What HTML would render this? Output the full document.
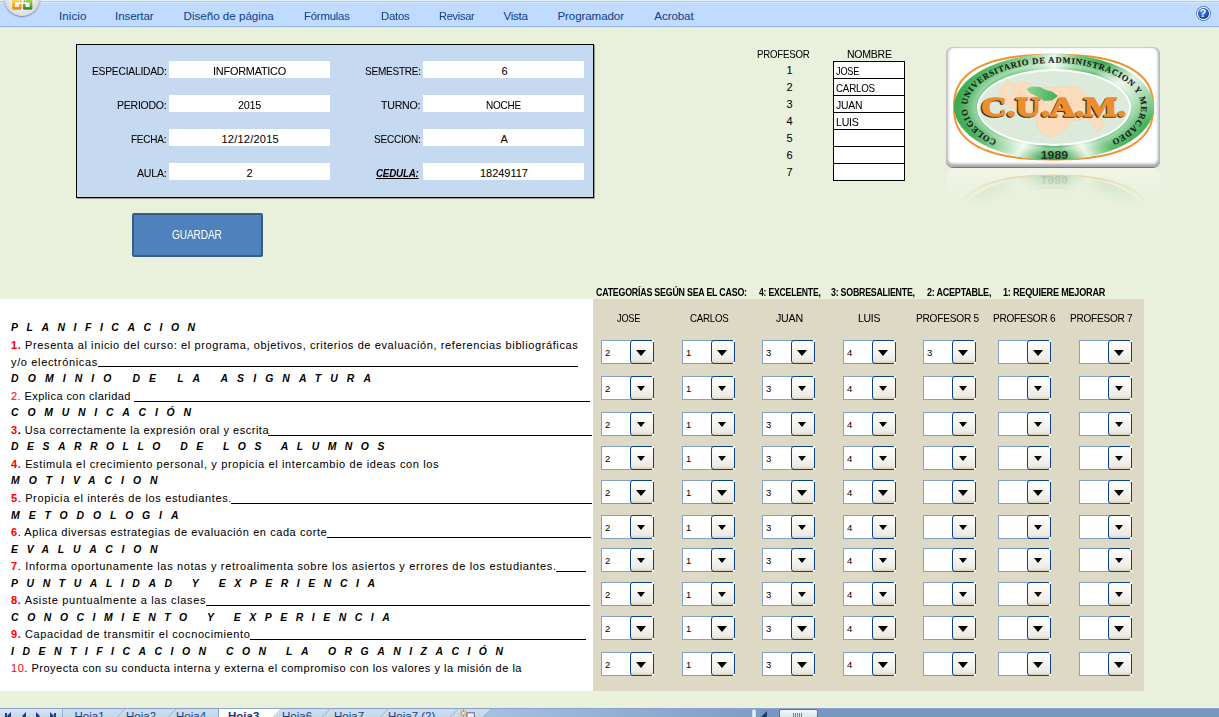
<!DOCTYPE html>
<html><head><meta charset="utf-8"><style>
*{margin:0;padding:0;box-sizing:border-box}
html,body{width:1219px;height:717px;overflow:hidden;background:#E9F0DC;position:relative;font-family:'Liberation Sans',sans-serif}
.t{position:absolute;white-space:pre;-webkit-text-stroke:0.05px currentColor}
#ribbon{position:absolute;left:0;top:0;width:1219px;height:28px;background:#BFDBFF}
#rtop{position:absolute;left:0;top:0;width:1219px;height:1px;background:#DDF5FF}
#rl1{position:absolute;left:0;top:1px;width:1219px;height:1px;background:#ABCAF2}
#rl2{position:absolute;left:0;top:2px;width:1219px;height:1px;background:#DCE6F8}
#rb1{position:absolute;left:0;top:26px;width:1219px;height:1px;background:#99B8E2}
#rb2{position:absolute;left:0;top:27px;width:1219px;height:1px;background:#D7E4F2}
#obtn{position:absolute;left:2px;top:-17px;width:38px;height:34px;border-radius:50%;background:radial-gradient(circle at 50% 30%,#ffffff 0%,#EEF1F5 45%,#C9CFD8 75%,#8E97A4 100%);box-shadow:0 1px 1px rgba(60,70,90,.5)}
#help{position:absolute;left:1196.5px;top:7.3px;width:13px;height:13px;border-radius:50%;background:radial-gradient(circle at 40% 35%,#4A8EF8,#0B3EB8 75%);border:1.4px solid #fff;box-shadow:0 0 0 0.9px #4F7EC4}
#help:after{content:"?";position:absolute;left:0;top:-1.5px;width:10.5px;text-align:center;color:#fff;font:bold 11px/13px 'Liberation Sans',sans-serif}
#box{position:absolute;left:76px;top:44px;width:518px;height:154px;background:#C5D9F1;border:1px solid #000;box-shadow:1px 1px 0 rgba(0,0,0,.35)}
.fld{position:absolute;width:161px;height:17px;background:#fff}
.pc{position:absolute;left:833px;width:72px;height:18px;border:1px solid #000;background:#fff}
#btn{position:absolute;left:132px;top:213px;width:131px;height:44px;background:#4F81BD;border:2px solid #385D8A;border-radius:2px}
#white{position:absolute;left:0;top:299px;width:593px;height:392px;background:#fff}
#tan{position:absolute;left:593px;top:299px;width:551px;height:392px;background:#DDD9C4}
.ul{position:absolute;height:1px;background:#000}
.dd{position:absolute;width:53px;height:24px;background:#fff;border:1px solid #85A2C4}
.dd span{position:absolute;left:3px;top:6px;font:9.5px/12px 'Liberation Sans',sans-serif;color:#000}
.dd b{position:absolute;right:-1px;top:-1px;width:24px;height:24px;border:1.6px solid #0B4187;border-radius:3px;background:linear-gradient(#FFFFFF,#F8F7F3 40%,#ECEAE3 88%,#D8D0BC)}
.dd b:before,.dd b:after{content:'';position:absolute;right:-1px;width:1.6px;height:1.6px;background:#fff}
.dd b:before{top:-1px} .dd b:after{bottom:-1px}
.dd i{position:absolute;left:4.6px;top:9px;width:0;height:0;border-left:5.9px solid transparent;border-right:5.9px solid transparent;border-top:6.2px solid #000}
.dd.s i{left:5.6px;top:9.4px;border-left-width:4.8px;border-right-width:4.8px;border-top-width:5.2px}
#tabs{position:absolute;left:0;top:708px;width:1219px;height:9px;background:#7A99C3}
#logo{position:absolute;left:940px;top:42px}
</style></head><body>
<div id="ribbon"></div><div id="rtop"></div><div id="rl1"></div><div id="rl2"></div><div id="rb1"></div><div id="rb2"></div>
<div style="position:absolute;left:3.5px;top:-21px;width:36px;height:37px;border-radius:50%;background:radial-gradient(ellipse at 50% 40%,#ffffff 0%,#F2F4F7 45%,#D3D8E0 72%,#9AA3B0 100%);box-shadow:0 1px 1.5px rgba(50,60,80,.55)"></div>
<svg style="position:absolute;left:0;top:0" width="40" height="20" viewBox="0 0 40 20">
 <defs>
  <linearGradient id="og" x1="0" y1="0" x2="0" y2="1"><stop offset="0" stop-color="#FFD24A"/><stop offset="1" stop-color="#F08C00"/></linearGradient>
  <linearGradient id="gg" x1="0" y1="0" x2="0" y2="1"><stop offset="0" stop-color="#9CD44A"/><stop offset="1" stop-color="#3E8E1E"/></linearGradient>
 </defs>
 <path d="M13.5,1 L13.5,8.3 L20.3,8.3 L20.3,5.2 M13.5,1 L17.5,1" stroke="url(#og)" stroke-width="2.8" fill="none" stroke-linejoin="round" stroke-linecap="round"/>
 <circle cx="20.6" cy="1.3" r="1.1" fill="#F5A623"/>
 <path d="M24.3,5.2 L24.3,8.3 L31,8.3 L31,1 L27.3,1" stroke="url(#gg)" stroke-width="2.8" fill="none" stroke-linejoin="round" stroke-linecap="round"/>
 <circle cx="24.6" cy="1.3" r="1.1" fill="#6DB33F"/>
</svg>

<div id="help"></div>
<div id="box"></div>
<div class="fld" style="left:169px;top:61px"></div>
<div class="fld" style="left:423px;top:61px"></div>
<div class="fld" style="left:169px;top:95px"></div>
<div class="fld" style="left:423px;top:95px"></div>
<div class="fld" style="left:169px;top:129px"></div>
<div class="fld" style="left:423px;top:129px"></div>
<div class="fld" style="left:169px;top:163px"></div>
<div class="fld" style="left:423px;top:163px"></div>
<div class="pc" style="top:61px"></div>
<div class="pc" style="top:78px"></div>
<div class="pc" style="top:95px"></div>
<div class="pc" style="top:112px"></div>
<div class="pc" style="top:129px"></div>
<div class="pc" style="top:146px"></div>
<div class="pc" style="top:163px"></div>
<div id="btn"></div>
<div id="white"></div><div id="tan"></div>
<div class="ul" style="left:98px;width:480px;top:366px"></div>
<div class="ul" style="left:134px;width:456px;top:401px"></div>
<div class="ul" style="left:268px;width:324px;top:435px"></div>
<div class="ul" style="left:231px;width:361px;top:503px"></div>
<div class="ul" style="left:327px;width:264px;top:537px"></div>
<div class="ul" style="left:556px;width:30px;top:571px"></div>
<div class="ul" style="left:206px;width:384px;top:605px"></div>
<div class="ul" style="left:250px;width:336px;top:639px"></div>
<div class="dd" style="left:601px;top:340px"><span>2</span><b><i></i></b></div>
<div class="dd" style="left:682px;top:340px"><span>1</span><b><i></i></b></div>
<div class="dd" style="left:762px;top:340px"><span>3</span><b><i></i></b></div>
<div class="dd" style="left:843px;top:340px"><span>4</span><b><i></i></b></div>
<div class="dd" style="left:923px;top:340px"><span>3</span><b><i></i></b></div>
<div class="dd" style="left:998px;top:340px"><span></span><b><i></i></b></div>
<div class="dd" style="left:1079px;top:340px"><span></span><b><i></i></b></div>
<div class="dd s" style="left:601px;top:376px"><span>2</span><b><i></i></b></div>
<div class="dd s" style="left:682px;top:376px"><span>1</span><b><i></i></b></div>
<div class="dd s" style="left:762px;top:376px"><span>3</span><b><i></i></b></div>
<div class="dd s" style="left:843px;top:376px"><span>4</span><b><i></i></b></div>
<div class="dd s" style="left:923px;top:376px"><span></span><b><i></i></b></div>
<div class="dd s" style="left:998px;top:376px"><span></span><b><i></i></b></div>
<div class="dd s" style="left:1079px;top:376px"><span></span><b><i></i></b></div>
<div class="dd s" style="left:601px;top:412px"><span>2</span><b><i></i></b></div>
<div class="dd s" style="left:682px;top:412px"><span>1</span><b><i></i></b></div>
<div class="dd s" style="left:762px;top:412px"><span>3</span><b><i></i></b></div>
<div class="dd s" style="left:843px;top:412px"><span>4</span><b><i></i></b></div>
<div class="dd s" style="left:923px;top:412px"><span></span><b><i></i></b></div>
<div class="dd s" style="left:998px;top:412px"><span></span><b><i></i></b></div>
<div class="dd s" style="left:1079px;top:412px"><span></span><b><i></i></b></div>
<div class="dd s" style="left:601px;top:446px"><span>2</span><b><i></i></b></div>
<div class="dd s" style="left:682px;top:446px"><span>1</span><b><i></i></b></div>
<div class="dd s" style="left:762px;top:446px"><span>3</span><b><i></i></b></div>
<div class="dd s" style="left:843px;top:446px"><span>4</span><b><i></i></b></div>
<div class="dd s" style="left:923px;top:446px"><span></span><b><i></i></b></div>
<div class="dd s" style="left:998px;top:446px"><span></span><b><i></i></b></div>
<div class="dd s" style="left:1079px;top:446px"><span></span><b><i></i></b></div>
<div class="dd" style="left:601px;top:480px"><span>2</span><b><i></i></b></div>
<div class="dd" style="left:682px;top:480px"><span>1</span><b><i></i></b></div>
<div class="dd" style="left:762px;top:480px"><span>3</span><b><i></i></b></div>
<div class="dd" style="left:843px;top:480px"><span>4</span><b><i></i></b></div>
<div class="dd" style="left:923px;top:480px"><span></span><b><i></i></b></div>
<div class="dd" style="left:998px;top:480px"><span></span><b><i></i></b></div>
<div class="dd" style="left:1079px;top:480px"><span></span><b><i></i></b></div>
<div class="dd s" style="left:601px;top:515px"><span>2</span><b><i></i></b></div>
<div class="dd s" style="left:682px;top:515px"><span>1</span><b><i></i></b></div>
<div class="dd s" style="left:762px;top:515px"><span>3</span><b><i></i></b></div>
<div class="dd s" style="left:843px;top:515px"><span>4</span><b><i></i></b></div>
<div class="dd s" style="left:923px;top:515px"><span></span><b><i></i></b></div>
<div class="dd s" style="left:998px;top:515px"><span></span><b><i></i></b></div>
<div class="dd s" style="left:1079px;top:515px"><span></span><b><i></i></b></div>
<div class="dd s" style="left:601px;top:548px"><span>2</span><b><i></i></b></div>
<div class="dd s" style="left:682px;top:548px"><span>1</span><b><i></i></b></div>
<div class="dd s" style="left:762px;top:548px"><span>3</span><b><i></i></b></div>
<div class="dd s" style="left:843px;top:548px"><span>4</span><b><i></i></b></div>
<div class="dd s" style="left:923px;top:548px"><span></span><b><i></i></b></div>
<div class="dd s" style="left:998px;top:548px"><span></span><b><i></i></b></div>
<div class="dd s" style="left:1079px;top:548px"><span></span><b><i></i></b></div>
<div class="dd s" style="left:601px;top:582px"><span>2</span><b><i></i></b></div>
<div class="dd s" style="left:682px;top:582px"><span>1</span><b><i></i></b></div>
<div class="dd s" style="left:762px;top:582px"><span>3</span><b><i></i></b></div>
<div class="dd s" style="left:843px;top:582px"><span>4</span><b><i></i></b></div>
<div class="dd s" style="left:923px;top:582px"><span></span><b><i></i></b></div>
<div class="dd s" style="left:998px;top:582px"><span></span><b><i></i></b></div>
<div class="dd s" style="left:1079px;top:582px"><span></span><b><i></i></b></div>
<div class="dd" style="left:601px;top:616px"><span>2</span><b><i></i></b></div>
<div class="dd" style="left:682px;top:616px"><span>1</span><b><i></i></b></div>
<div class="dd" style="left:762px;top:616px"><span>3</span><b><i></i></b></div>
<div class="dd" style="left:843px;top:616px"><span>4</span><b><i></i></b></div>
<div class="dd" style="left:923px;top:616px"><span></span><b><i></i></b></div>
<div class="dd" style="left:998px;top:616px"><span></span><b><i></i></b></div>
<div class="dd" style="left:1079px;top:616px"><span></span><b><i></i></b></div>
<div class="dd" style="left:601px;top:652px"><span>2</span><b><i></i></b></div>
<div class="dd" style="left:682px;top:652px"><span>1</span><b><i></i></b></div>
<div class="dd" style="left:762px;top:652px"><span>3</span><b><i></i></b></div>
<div class="dd" style="left:843px;top:652px"><span>4</span><b><i></i></b></div>
<div class="dd" style="left:923px;top:652px"><span></span><b><i></i></b></div>
<div class="dd" style="left:998px;top:652px"><span></span><b><i></i></b></div>
<div class="dd" style="left:1079px;top:652px"><span></span><b><i></i></b></div>
<div style="position:absolute;left:0;top:708px;width:1219px;height:9px;background:#7796C2"></div>
<div style="position:absolute;left:0;top:708px;width:495px;height:9px;background:linear-gradient(#A9BFDD,#CFDDF0 2px,#C3D5EE)"></div>
<div style="position:absolute;left:490px;top:708px;width:262px;height:9px;background:linear-gradient(90deg,#A4BCE0,#8FAAD2 60%,#7F9DC8)"></div>
<div style="position:absolute;left:0;top:708px;width:1219px;height:1px;background:#8AA4C8"></div>
<!-- nav arrows -->
<div style="position:absolute;left:0;top:709px;width:62px;height:8px;background:linear-gradient(#D9E5F5,#C6D7EE)"></div>
<div style="position:absolute;left:62px;top:709px;width:1px;height:8px;background:#9DB3D3"></div>
<div style="position:absolute;left:5px;top:713px;width:1.5px;height:4px;background:#1E3F83"></div>
<div style="position:absolute;left:7px;top:712px;width:0;height:0;border-right:4px solid #1E3F83;border-top:4px solid transparent;border-bottom:4px solid transparent"></div>
<div style="position:absolute;left:22px;top:712px;width:0;height:0;border-right:4px solid #1E3F83;border-top:4px solid transparent;border-bottom:4px solid transparent"></div>
<div style="position:absolute;left:36px;top:712px;width:0;height:0;border-left:4px solid #1E3F83;border-top:4px solid transparent;border-bottom:4px solid transparent"></div>
<div style="position:absolute;left:50px;top:712px;width:0;height:0;border-left:4px solid #1E3F83;border-top:4px solid transparent;border-bottom:4px solid transparent"></div>
<div style="position:absolute;left:54px;top:713px;width:1.5px;height:4px;background:#1E3F83"></div>
<!-- tabs -->
<svg style="position:absolute;left:0;top:708px" width="760" height="9" viewBox="0 0 760 9">
 <g stroke="#8DA5C8" stroke-width="1" fill="none">
  <path d="M118.5,9 L126.5,1 M169.5,9 L177.5,1 M273.5,9 L281.5,1 M323.5,9 L331.5,1 M381.5,9 L389.5,1 M451.5,9 L459.5,1 M484,9 L492,1" stroke="#fff" stroke-opacity=".8"/>
  <path d="M117.5,9 L125.5,1"/><path d="M168.5,9 L176.5,1"/><path d="M272.5,9 L280.5,1"/><path d="M322.5,9 L330.5,1"/><path d="M380.5,9 L388.5,1"/><path d="M450.5,9 L458.5,1"/><path d="M483,9 L491,1"/>
 </g>
 <path d="M218.5,9 L218.5,1 L280.5,1 L272.5,9 Z" fill="#fff"/>
 <path d="M218.5,9 L218.5,1" stroke="#8DA5C8"/>
 <path d="M491,1 L760,1 L760,9 L483,9 Z" fill="url(#bg2)"/>
 <defs><linearGradient id="bg2" x1="0" x2="1" y1="0" y2="0"><stop offset="0" stop-color="#A7BFE2"/><stop offset="1" stop-color="#7F9CC7"/></linearGradient></defs>
 <g font-family="Liberation Sans" font-size="11.5" fill="#1E3F83">
  <text x="74.5" y="11.6">Hoja1</text><text x="126" y="11.6">Hoja2</text><text x="176" y="11.6">Hoja4</text>
  <text x="228" y="12" font-weight="bold" fill="#15337A">Hoja3</text>
  <text x="282" y="11.6">Hoja6</text><text x="334" y="11.6">Hoja7</text><text x="388" y="11.6">Hoja7 (2)</text>
 </g>
 <rect x="467" y="4.8" width="7.3" height="6" fill="#E8EEF6" stroke="#50607E" stroke-width=".9"/>
 <g stroke="#E08A10" stroke-width="1" stroke-linecap="round"><path d="M463.5,1.5 L463.5,9 M460,5.3 L467,5.3 M461,2.8 L466,7.8 M466,2.8 L461,7.8"/></g>
 <circle cx="463.5" cy="5.3" r="1.3" fill="#FFF6C0"/>
 <rect x="752" y="1.5" width="4" height="8" rx="1" fill="#EAF1FB" stroke="#7F9AC0" stroke-width=".5"/>
</svg>
<div style="position:absolute;left:761px;top:711px;width:0;height:0;border-right:6px solid #1F3D70;border-top:6px solid transparent"></div>
<div style="position:absolute;left:779px;top:709px;width:39px;height:9px;border:1px solid #5A74A0;border-radius:2px;background:linear-gradient(#F4F7FB,#DDE5F0)"></div>
<div style="position:absolute;left:793px;top:713px;width:9px;height:4px;background:repeating-linear-gradient(90deg,#6E7F99 0 1px,transparent 1px 2px)"></div>

<div id="lg" style="position:absolute;left:930px;top:40px;width:250px;height:180px">
 <div id="refl" style="position:absolute;left:0;top:0;width:250px;height:180px;transform-origin:0 127.5px;transform:scaleY(-1);opacity:.3;-webkit-mask-image:linear-gradient(to bottom,transparent 0,transparent 90px,rgba(0,0,0,.25) 102px,#000 125px)">
  <div style="position:absolute;left:16px;top:7px;width:214px;height:120px;border-radius:7px;background:#fff"></div>
  <svg style="position:absolute;left:0;top:0" width="250" height="180" viewBox="930 40 250 180"><path d="M1153.10,107.10 L1153.07,109.94 L1152.99,112.04 L1152.85,113.93 L1152.66,115.69 L1152.42,117.36 L1152.12,118.96 L1151.76,120.50 L1151.36,121.99 L1150.89,123.43 L1150.38,124.84 L1149.81,126.21 L1149.18,127.54 L1148.51,128.84 L1147.78,130.11 L1146.99,131.35 L1146.16,132.57 L1145.27,133.75 L1144.33,134.91 L1143.33,136.04 L1142.28,137.14 L1141.19,138.21 L1140.04,139.27 L1138.84,140.29 L1137.58,141.29 L1136.28,142.26 L1134.93,143.21 L1133.52,144.13 L1132.07,145.02 L1130.56,145.89 L1129.01,146.74 L1127.40,147.55 L1125.75,148.34 L1124.05,149.11 L1122.29,149.85 L1120.49,150.56 L1118.64,151.24 L1116.74,151.90 L1114.79,152.53 L1112.80,153.14 L1110.75,153.72 L1108.65,154.27 L1106.50,154.79 L1104.30,155.28 L1102.05,155.75 L1099.74,156.19 L1097.38,156.60 L1094.96,156.99 L1092.49,157.34 L1089.95,157.67 L1087.35,157.97 L1084.67,158.24 L1081.92,158.48 L1079.09,158.70 L1076.16,158.88 L1073.12,159.04 L1069.94,159.17 L1066.59,159.27 L1062.99,159.34 L1059.00,159.39 L1053.60,159.40 L1048.20,159.39 L1044.21,159.34 L1040.61,159.27 L1037.26,159.17 L1034.08,159.04 L1031.04,158.88 L1028.11,158.70 L1025.28,158.48 L1022.53,158.24 L1019.85,157.97 L1017.25,157.67 L1014.71,157.34 L1012.24,156.99 L1009.82,156.60 L1007.46,156.19 L1005.15,155.75 L1002.90,155.28 L1000.70,154.79 L998.55,154.27 L996.45,153.72 L994.40,153.14 L992.41,152.53 L990.46,151.90 L988.56,151.24 L986.71,150.56 L984.91,149.85 L983.15,149.11 L981.45,148.34 L979.80,147.55 L978.19,146.74 L976.64,145.89 L975.13,145.02 L973.68,144.13 L972.27,143.21 L970.92,142.26 L969.62,141.29 L968.36,140.29 L967.16,139.27 L966.01,138.21 L964.92,137.14 L963.87,136.04 L962.87,134.91 L961.93,133.75 L961.04,132.57 L960.21,131.35 L959.42,130.11 L958.69,128.84 L958.02,127.54 L957.39,126.21 L956.82,124.84 L956.31,123.43 L955.84,121.99 L955.44,120.50 L955.08,118.96 L954.78,117.36 L954.54,115.69 L954.35,113.93 L954.21,112.04 L954.13,109.94 L954.10,107.10 L954.13,104.26 L954.21,102.16 L954.35,100.27 L954.54,98.51 L954.78,96.84 L955.08,95.24 L955.44,93.70 L955.84,92.21 L956.31,90.77 L956.82,89.36 L957.39,87.99 L958.02,86.66 L958.69,85.36 L959.42,84.09 L960.21,82.85 L961.04,81.63 L961.93,80.45 L962.87,79.29 L963.87,78.16 L964.92,77.06 L966.01,75.99 L967.16,74.93 L968.36,73.91 L969.62,72.91 L970.92,71.94 L972.27,70.99 L973.68,70.07 L975.13,69.18 L976.64,68.31 L978.19,67.46 L979.80,66.65 L981.45,65.86 L983.15,65.09 L984.91,64.35 L986.71,63.64 L988.56,62.96 L990.46,62.30 L992.41,61.67 L994.40,61.06 L996.45,60.48 L998.55,59.93 L1000.70,59.41 L1002.90,58.92 L1005.15,58.45 L1007.46,58.01 L1009.82,57.60 L1012.24,57.21 L1014.71,56.86 L1017.25,56.53 L1019.85,56.23 L1022.53,55.96 L1025.28,55.72 L1028.11,55.50 L1031.04,55.32 L1034.08,55.16 L1037.26,55.03 L1040.61,54.93 L1044.21,54.86 L1048.20,54.81 L1053.60,54.80 L1059.00,54.81 L1062.99,54.86 L1066.59,54.93 L1069.94,55.03 L1073.12,55.16 L1076.16,55.32 L1079.09,55.50 L1081.92,55.72 L1084.67,55.96 L1087.35,56.23 L1089.95,56.53 L1092.49,56.86 L1094.96,57.21 L1097.38,57.60 L1099.74,58.01 L1102.05,58.45 L1104.30,58.92 L1106.50,59.41 L1108.65,59.93 L1110.75,60.48 L1112.80,61.06 L1114.79,61.67 L1116.74,62.30 L1118.64,62.96 L1120.49,63.64 L1122.29,64.35 L1124.05,65.09 L1125.75,65.86 L1127.40,66.65 L1129.01,67.46 L1130.56,68.31 L1132.07,69.18 L1133.52,70.07 L1134.93,70.99 L1136.28,71.94 L1137.58,72.91 L1138.84,73.91 L1140.04,74.93 L1141.19,75.99 L1142.28,77.06 L1143.33,78.16 L1144.33,79.29 L1145.27,80.45 L1146.16,81.63 L1146.99,82.85 L1147.78,84.09 L1148.51,85.36 L1149.18,86.66 L1149.81,87.99 L1150.38,89.36 L1150.89,90.77 L1151.36,92.21 L1151.76,93.70 L1152.12,95.24 L1152.42,96.84 L1152.66,98.51 L1152.85,100.27 L1152.99,102.16 L1153.07,104.26 Z" fill="none" stroke="#F0922E" stroke-width="2"/></svg>
  <div style="position:absolute;left:24.4px;top:13.8px;width:199.2px;height:106.6px;border-radius:50%;background:conic-gradient(from 0deg,#e6f5e7 0deg,#6cc77a 28deg,#3daf52 50deg,#e0f3e1 70deg,#44b358 100deg,#56bb67 125deg,#e6f5e7 145deg,#3aa94e 170deg,#3aa94e 192deg,#eaf7eb 218deg,#45b258 250deg,#3aab4f 275deg,#5cc06c 310deg,#a8dcb0 340deg,#e6f5e7 360deg)"></div><div style="position:absolute;left:24.4px;top:13.8px;width:199.2px;height:106.6px;border-radius:50%;background:radial-gradient(closest-side,rgba(255,255,255,0) 70%,rgba(255,255,255,.45) 79%,rgba(255,255,255,.15) 88%,rgba(255,255,255,0) 96%)"></div>
  <div style="position:absolute;left:47px;top:28.6px;width:154px;height:77px;border-radius:50%;background:#fff"></div>
  <div style="position:absolute;left:49px;top:30.6px;width:150px;height:73px;border-radius:50%;background:#DCEADC"></div>
  <svg style="position:absolute;left:0;top:0" width="250" height="180" viewBox="930 40 250 180">
   <text x="1040.8" y="159.4" textLength="27.2" lengthAdjust="spacingAndGlyphs" font-family="Liberation Sans" font-weight="bold" font-size="11.5" fill="#2b2b2b">1989</text>
  </svg>
 </div>
 <div style="position:absolute;left:16px;top:7px;width:214px;height:120px;border-radius:7px;background:#fff;box-shadow:inset 3px 0 3px -1px #b9b9b9,inset -3px 0 3px -1px #b0b0b0,inset 0 -4px 3px -1px #a6a6a6,inset 0 1px 1px #d0d0d0,0 1px 0 #7a7a7a"></div>
 <svg style="position:absolute;left:0;top:0" width="250" height="180" viewBox="930 40 250 180"><path d="M1153.10,107.10 L1153.07,109.94 L1152.99,112.04 L1152.85,113.93 L1152.66,115.69 L1152.42,117.36 L1152.12,118.96 L1151.76,120.50 L1151.36,121.99 L1150.89,123.43 L1150.38,124.84 L1149.81,126.21 L1149.18,127.54 L1148.51,128.84 L1147.78,130.11 L1146.99,131.35 L1146.16,132.57 L1145.27,133.75 L1144.33,134.91 L1143.33,136.04 L1142.28,137.14 L1141.19,138.21 L1140.04,139.27 L1138.84,140.29 L1137.58,141.29 L1136.28,142.26 L1134.93,143.21 L1133.52,144.13 L1132.07,145.02 L1130.56,145.89 L1129.01,146.74 L1127.40,147.55 L1125.75,148.34 L1124.05,149.11 L1122.29,149.85 L1120.49,150.56 L1118.64,151.24 L1116.74,151.90 L1114.79,152.53 L1112.80,153.14 L1110.75,153.72 L1108.65,154.27 L1106.50,154.79 L1104.30,155.28 L1102.05,155.75 L1099.74,156.19 L1097.38,156.60 L1094.96,156.99 L1092.49,157.34 L1089.95,157.67 L1087.35,157.97 L1084.67,158.24 L1081.92,158.48 L1079.09,158.70 L1076.16,158.88 L1073.12,159.04 L1069.94,159.17 L1066.59,159.27 L1062.99,159.34 L1059.00,159.39 L1053.60,159.40 L1048.20,159.39 L1044.21,159.34 L1040.61,159.27 L1037.26,159.17 L1034.08,159.04 L1031.04,158.88 L1028.11,158.70 L1025.28,158.48 L1022.53,158.24 L1019.85,157.97 L1017.25,157.67 L1014.71,157.34 L1012.24,156.99 L1009.82,156.60 L1007.46,156.19 L1005.15,155.75 L1002.90,155.28 L1000.70,154.79 L998.55,154.27 L996.45,153.72 L994.40,153.14 L992.41,152.53 L990.46,151.90 L988.56,151.24 L986.71,150.56 L984.91,149.85 L983.15,149.11 L981.45,148.34 L979.80,147.55 L978.19,146.74 L976.64,145.89 L975.13,145.02 L973.68,144.13 L972.27,143.21 L970.92,142.26 L969.62,141.29 L968.36,140.29 L967.16,139.27 L966.01,138.21 L964.92,137.14 L963.87,136.04 L962.87,134.91 L961.93,133.75 L961.04,132.57 L960.21,131.35 L959.42,130.11 L958.69,128.84 L958.02,127.54 L957.39,126.21 L956.82,124.84 L956.31,123.43 L955.84,121.99 L955.44,120.50 L955.08,118.96 L954.78,117.36 L954.54,115.69 L954.35,113.93 L954.21,112.04 L954.13,109.94 L954.10,107.10 L954.13,104.26 L954.21,102.16 L954.35,100.27 L954.54,98.51 L954.78,96.84 L955.08,95.24 L955.44,93.70 L955.84,92.21 L956.31,90.77 L956.82,89.36 L957.39,87.99 L958.02,86.66 L958.69,85.36 L959.42,84.09 L960.21,82.85 L961.04,81.63 L961.93,80.45 L962.87,79.29 L963.87,78.16 L964.92,77.06 L966.01,75.99 L967.16,74.93 L968.36,73.91 L969.62,72.91 L970.92,71.94 L972.27,70.99 L973.68,70.07 L975.13,69.18 L976.64,68.31 L978.19,67.46 L979.80,66.65 L981.45,65.86 L983.15,65.09 L984.91,64.35 L986.71,63.64 L988.56,62.96 L990.46,62.30 L992.41,61.67 L994.40,61.06 L996.45,60.48 L998.55,59.93 L1000.70,59.41 L1002.90,58.92 L1005.15,58.45 L1007.46,58.01 L1009.82,57.60 L1012.24,57.21 L1014.71,56.86 L1017.25,56.53 L1019.85,56.23 L1022.53,55.96 L1025.28,55.72 L1028.11,55.50 L1031.04,55.32 L1034.08,55.16 L1037.26,55.03 L1040.61,54.93 L1044.21,54.86 L1048.20,54.81 L1053.60,54.80 L1059.00,54.81 L1062.99,54.86 L1066.59,54.93 L1069.94,55.03 L1073.12,55.16 L1076.16,55.32 L1079.09,55.50 L1081.92,55.72 L1084.67,55.96 L1087.35,56.23 L1089.95,56.53 L1092.49,56.86 L1094.96,57.21 L1097.38,57.60 L1099.74,58.01 L1102.05,58.45 L1104.30,58.92 L1106.50,59.41 L1108.65,59.93 L1110.75,60.48 L1112.80,61.06 L1114.79,61.67 L1116.74,62.30 L1118.64,62.96 L1120.49,63.64 L1122.29,64.35 L1124.05,65.09 L1125.75,65.86 L1127.40,66.65 L1129.01,67.46 L1130.56,68.31 L1132.07,69.18 L1133.52,70.07 L1134.93,70.99 L1136.28,71.94 L1137.58,72.91 L1138.84,73.91 L1140.04,74.93 L1141.19,75.99 L1142.28,77.06 L1143.33,78.16 L1144.33,79.29 L1145.27,80.45 L1146.16,81.63 L1146.99,82.85 L1147.78,84.09 L1148.51,85.36 L1149.18,86.66 L1149.81,87.99 L1150.38,89.36 L1150.89,90.77 L1151.36,92.21 L1151.76,93.70 L1152.12,95.24 L1152.42,96.84 L1152.66,98.51 L1152.85,100.27 L1152.99,102.16 L1153.07,104.26 Z" fill="none" stroke="#F0922E" stroke-width="2"/></svg>
 <div style="position:absolute;left:24.4px;top:13.8px;width:199.2px;height:106.6px;border-radius:50%;background:conic-gradient(from 0deg,#e6f5e7 0deg,#6cc77a 28deg,#3daf52 50deg,#e0f3e1 70deg,#44b358 100deg,#56bb67 125deg,#e6f5e7 145deg,#3aa94e 170deg,#3aa94e 192deg,#eaf7eb 218deg,#45b258 250deg,#3aab4f 275deg,#5cc06c 310deg,#a8dcb0 340deg,#e6f5e7 360deg)"></div><div style="position:absolute;left:24.4px;top:13.8px;width:199.2px;height:106.6px;border-radius:50%;background:radial-gradient(closest-side,rgba(255,255,255,0) 70%,rgba(255,255,255,.45) 79%,rgba(255,255,255,.15) 88%,rgba(255,255,255,0) 96%)"></div>
 <div style="position:absolute;left:47px;top:28.6px;width:154px;height:77px;border-radius:50%;background:#fff"></div>
 <div style="position:absolute;left:49px;top:30.6px;width:150px;height:73px;border-radius:50%;background:#DCEADC"></div>
 <svg style="position:absolute;left:0;top:0" width="250" height="180" viewBox="930 40 250 180">
  <defs>
   <path id="rp" d="M996.92,140.53 A87.0,44.3 0 1 1 1109.92,141.04"/>
  </defs>
  <path d="M1008,81.4 L1013.6,85.8 L1019.5,80.9 L1029.4,83.8 L1033.3,87.7 L1047,87.7 L1059.9,86.8 L1076.6,86.8 L1084.5,92.7 L1088.4,101.5 L1100.2,117.3 L1104.2,123.2 L1098.3,132.5 L1091.4,123.2 L1088.4,118 L1071.7,121.2 L1065.8,129.1 L1053,137 L1043.1,135 L1037.2,127.1 L1036.3,118.3 L1016.6,109.4 L1004.8,103.5 L1003.8,97.6 L997.4,92.7 Z" fill="#FBDDBD" stroke="#F5CFA5" stroke-width=".6"/>
  <path d="M1010,92 L1030,97 L1045,104 M1040,88 L1035,110 M1060,90 L1065,120 M1075,95 L1090,112 M1020,85 L1022,112 M1070,88 L1072,105 L1088,108" stroke="#F4CDA6" stroke-width=".5" fill="none"/><ellipse cx="1009.5" cy="92" rx="2.5" ry="3" fill="#DCEADC"/>
  <defs><linearGradient id="gm" x1="0" x2="1"><stop offset="0" stop-color="#8ED39A"/><stop offset="1" stop-color="#3FAE55"/></linearGradient></defs><path d="M1026.4,89 L1032,86.5 L1040,87 L1046,90 L1052,91.5 L1058,96 L1052,100.5 L1044,101 L1038,97 L1030,93 Z" fill="url(#gm)"/>
  <text x="980" y="116.5" textLength="145" lengthAdjust="spacingAndGlyphs" font-family="Liberation Serif" font-weight="bold" font-size="26.5" fill="#3a3a3a" stroke="#3a3a3a" stroke-width="1.5" stroke-linejoin="round">C.U.A.M.</text>
  <text x="981.2" y="115.6" textLength="145" lengthAdjust="spacingAndGlyphs" font-family="Liberation Serif" font-weight="bold" font-size="26.5" fill="#EE8D2C" stroke="#EE8D2C" stroke-width="1.5" stroke-linejoin="round">C.U.A.M.</text>
  <text x="1040.8" y="159.4" textLength="27.2" lengthAdjust="spacingAndGlyphs" font-family="Liberation Sans" font-weight="bold" font-size="11.5" fill="#2b2b2b">1989</text>
  <text font-family="Liberation Serif" font-weight="bold" font-size="8.6" fill="#1a1a1a" stroke="#1a1a1a" stroke-width=".15"><textPath href="#rp" textLength="305" lengthAdjust="spacing">COLEGIO UNIVERSITARIO DE ADMINISTRACION Y MERCADEO</textPath></text>
 </svg>
</div>

<div class="t" style="left:59.0px;top:10.10px;font:normal normal 11.6px/12.957px 'Liberation Sans', sans-serif;letter-spacing:0.064px;color:#15428B;">Inicio</div>
<div class="t" style="left:115.0px;top:10.10px;font:normal normal 11.6px/12.957px 'Liberation Sans', sans-serif;letter-spacing:-0.088px;color:#15428B;">Insertar</div>
<div class="t" style="left:183.5px;top:10.10px;font:normal normal 11.6px/12.957px 'Liberation Sans', sans-serif;letter-spacing:0.003px;color:#15428B;">Diseño de página</div>
<div class="t" style="left:303.5px;top:10.10px;font:normal normal 11.6px/12.957px 'Liberation Sans', sans-serif;letter-spacing:-0.250px;transform:scaleX(0.9854);transform-origin:0 0;color:#15428B;">Fórmulas</div>
<div class="t" style="left:380.6px;top:10.10px;font:normal normal 11.6px/12.957px 'Liberation Sans', sans-serif;letter-spacing:-0.250px;transform:scaleX(0.9830);transform-origin:0 0;color:#15428B;">Datos</div>
<div class="t" style="left:439.3px;top:10.10px;font:normal normal 11.6px/12.957px 'Liberation Sans', sans-serif;letter-spacing:-0.250px;transform:scaleX(0.9441);transform-origin:0 0;color:#15428B;">Revisar</div>
<div class="t" style="left:503.4px;top:10.10px;font:normal normal 11.6px/12.957px 'Liberation Sans', sans-serif;letter-spacing:-0.245px;color:#15428B;">Vista</div>
<div class="t" style="left:557.5px;top:10.10px;font:normal normal 11.6px/12.957px 'Liberation Sans', sans-serif;letter-spacing:-0.117px;color:#15428B;">Programador</div>
<div class="t" style="left:654.3px;top:10.10px;font:normal normal 11.6px/12.957px 'Liberation Sans', sans-serif;letter-spacing:-0.095px;color:#15428B;">Acrobat</div>
<div class="t" style="left:91.8px;top:64.95px;font:normal normal 11px/12.287px 'Liberation Sans', sans-serif;letter-spacing:-0.250px;transform:scaleX(0.9346);transform-origin:0 0;color:#000;">ESPECIALIDAD:</div>
<div class="t" style="left:117.0px;top:98.95px;font:normal normal 11px/12.287px 'Liberation Sans', sans-serif;letter-spacing:-0.250px;transform:scaleX(0.9549);transform-origin:0 0;color:#000;">PERIODO:</div>
<div class="t" style="left:131.2px;top:132.94px;font:normal normal 11px/12.287px 'Liberation Sans', sans-serif;letter-spacing:-0.250px;transform:scaleX(0.9081);transform-origin:0 0;color:#000;">FECHA:</div>
<div class="t" style="left:137.0px;top:166.94px;font:normal normal 11px/12.287px 'Liberation Sans', sans-serif;letter-spacing:-0.250px;transform:scaleX(0.9644);transform-origin:0 0;color:#000;">AULA:</div>
<div class="t" style="left:364.8px;top:64.95px;font:normal normal 11px/12.287px 'Liberation Sans', sans-serif;letter-spacing:-0.250px;transform:scaleX(0.9094);transform-origin:0 0;color:#000;">SEMESTRE:</div>
<div class="t" style="left:381.3px;top:98.95px;font:normal normal 11px/12.287px 'Liberation Sans', sans-serif;letter-spacing:-0.250px;transform:scaleX(0.9653);transform-origin:0 0;color:#000;">TURNO:</div>
<div class="t" style="left:374.0px;top:132.94px;font:normal normal 11px/12.287px 'Liberation Sans', sans-serif;letter-spacing:-0.250px;transform:scaleX(0.9098);transform-origin:0 0;color:#000;">SECCION:</div>
<div class="t" style="left:376.0px;top:166.94px;font:italic bold 11px/12.287px 'Liberation Sans', sans-serif;letter-spacing:-0.250px;transform:scaleX(0.8917);transform-origin:0 0;color:#000;-webkit-text-stroke:0;text-decoration:underline;">CEDULA:</div>
<div class="t" style="left:213.4px;top:64.95px;font:normal normal 11px/12.287px 'Liberation Sans', sans-serif;letter-spacing:-0.250px;transform:scaleX(0.9947);transform-origin:0 0;color:#000;">INFORMATICO</div>
<div class="t" style="left:238.0px;top:98.95px;font:normal normal 11px/12.287px 'Liberation Sans', sans-serif;letter-spacing:-0.250px;transform:scaleX(0.9859);transform-origin:0 0;color:#000;">2015</div>
<div class="t" style="left:221.5px;top:132.94px;font:normal normal 11px/12.287px 'Liberation Sans', sans-serif;letter-spacing:0.226px;color:#000;">12/12/2015</div>
<div class="t" style="left:246.5px;top:166.94px;font:normal normal 11px/12.287px 'Liberation Sans', sans-serif;letter-spacing:0.000px;color:#000;">2</div>
<div class="t" style="left:501.5px;top:64.95px;font:normal normal 11px/12.287px 'Liberation Sans', sans-serif;letter-spacing:0.000px;color:#000;">6</div>
<div class="t" style="left:486.3px;top:98.95px;font:normal normal 11px/12.287px 'Liberation Sans', sans-serif;letter-spacing:-0.250px;transform:scaleX(0.9062);transform-origin:0 0;color:#000;">NOCHE</div>
<div class="t" style="left:500.5px;top:132.94px;font:normal normal 11px/12.287px 'Liberation Sans', sans-serif;letter-spacing:0.000px;color:#000;">A</div>
<div class="t" style="left:480.0px;top:166.94px;font:normal normal 11px/12.287px 'Liberation Sans', sans-serif;letter-spacing:-0.032px;color:#000;">18249117</div>
<div class="t" style="left:756.6px;top:47.84px;font:normal normal 11px/12.287px 'Liberation Sans', sans-serif;letter-spacing:-0.250px;transform:scaleX(0.8802);transform-origin:0 0;color:#000;">PROFESOR</div>
<div class="t" style="left:846.7px;top:47.84px;font:normal normal 11px/12.287px 'Liberation Sans', sans-serif;letter-spacing:-0.250px;transform:scaleX(0.9547);transform-origin:0 0;color:#000;">NOMBRE</div>
<div class="t" style="left:786.5px;top:63.95px;font:normal normal 11px/12.287px 'Liberation Sans', sans-serif;letter-spacing:0.000px;color:#000;">1</div>
<div class="t" style="left:786.5px;top:80.95px;font:normal normal 11px/12.287px 'Liberation Sans', sans-serif;letter-spacing:0.000px;color:#000;">2</div>
<div class="t" style="left:786.5px;top:97.95px;font:normal normal 11px/12.287px 'Liberation Sans', sans-serif;letter-spacing:0.000px;color:#000;">3</div>
<div class="t" style="left:786.5px;top:114.95px;font:normal normal 11px/12.287px 'Liberation Sans', sans-serif;letter-spacing:0.000px;color:#000;">4</div>
<div class="t" style="left:786.5px;top:131.94px;font:normal normal 11px/12.287px 'Liberation Sans', sans-serif;letter-spacing:0.000px;color:#000;">5</div>
<div class="t" style="left:786.5px;top:148.94px;font:normal normal 11px/12.287px 'Liberation Sans', sans-serif;letter-spacing:0.000px;color:#000;">6</div>
<div class="t" style="left:786.5px;top:165.94px;font:normal normal 11px/12.287px 'Liberation Sans', sans-serif;letter-spacing:0.000px;color:#000;">7</div>
<div class="t" style="left:835.9px;top:64.55px;font:normal normal 11px/12.287px 'Liberation Sans', sans-serif;letter-spacing:-0.250px;transform:scaleX(0.8362);transform-origin:0 0;color:#000;">JOSE</div>
<div class="t" style="left:835.9px;top:81.55px;font:normal normal 11px/12.287px 'Liberation Sans', sans-serif;letter-spacing:-0.250px;transform:scaleX(0.8886);transform-origin:0 0;color:#000;">CARLOS</div>
<div class="t" style="left:835.9px;top:98.55px;font:normal normal 11px/12.287px 'Liberation Sans', sans-serif;letter-spacing:-0.250px;transform:scaleX(0.9470);transform-origin:0 0;color:#000;">JUAN</div>
<div class="t" style="left:835.9px;top:115.55px;font:normal normal 11px/12.287px 'Liberation Sans', sans-serif;letter-spacing:-0.250px;transform:scaleX(0.9613);transform-origin:0 0;color:#000;">LUIS</div>
<div class="t" style="left:172.0px;top:228.74px;font:normal normal 12px/13.404px 'Liberation Sans', sans-serif;letter-spacing:-0.250px;transform:scaleX(0.8545);transform-origin:0 0;color:#fff;-webkit-text-stroke:0;">GUARDAR</div>
<div class="t" style="left:596.4px;top:287.25px;font:normal bold 10px/11.17px 'Liberation Sans', sans-serif;letter-spacing:-0.250px;transform:scaleX(0.8850);transform-origin:0 0;color:#000;-webkit-text-stroke:0;">CATEGORÍAS SEGÚN SEA EL CASO:</div>
<div class="t" style="left:758.5px;top:287.25px;font:normal bold 10px/11.17px 'Liberation Sans', sans-serif;letter-spacing:-0.250px;transform:scaleX(0.8661);transform-origin:0 0;color:#000;-webkit-text-stroke:0;">4: EXCELENTE,</div>
<div class="t" style="left:831.0px;top:287.25px;font:normal bold 10px/11.17px 'Liberation Sans', sans-serif;letter-spacing:-0.250px;transform:scaleX(0.8799);transform-origin:0 0;color:#000;-webkit-text-stroke:0;">3: SOBRESALIENTE,</div>
<div class="t" style="left:926.8px;top:287.25px;font:normal bold 10px/11.17px 'Liberation Sans', sans-serif;letter-spacing:-0.250px;transform:scaleX(0.9013);transform-origin:0 0;color:#000;-webkit-text-stroke:0;">2: ACEPTABLE,</div>
<div class="t" style="left:1002.5px;top:287.25px;font:normal bold 10px/11.17px 'Liberation Sans', sans-serif;letter-spacing:-0.250px;transform:scaleX(0.9128);transform-origin:0 0;color:#000;-webkit-text-stroke:0;">1: REQUIERE MEJORAR</div>
<div class="t" style="left:617.4px;top:311.85px;font:normal normal 11px/12.287px 'Liberation Sans', sans-serif;letter-spacing:-0.250px;transform:scaleX(0.8362);transform-origin:0 0;color:#000;">JOSE</div>
<div class="t" style="left:689.9px;top:311.85px;font:normal normal 11px/12.287px 'Liberation Sans', sans-serif;letter-spacing:-0.250px;transform:scaleX(0.8818);transform-origin:0 0;color:#000;">CARLOS</div>
<div class="t" style="left:775.5px;top:311.85px;font:normal normal 11px/12.287px 'Liberation Sans', sans-serif;letter-spacing:-0.250px;transform:scaleX(0.9684);transform-origin:0 0;color:#000;">JUAN</div>
<div class="t" style="left:858.2px;top:311.85px;font:normal normal 11px/12.287px 'Liberation Sans', sans-serif;letter-spacing:-0.250px;transform:scaleX(0.9486);transform-origin:0 0;color:#000;">LUIS</div>
<div class="t" style="left:915.7px;top:311.85px;font:normal normal 11px/12.287px 'Liberation Sans', sans-serif;letter-spacing:-0.250px;transform:scaleX(0.9205);transform-origin:0 0;color:#000;">PROFESOR 5</div>
<div class="t" style="left:993.4px;top:311.85px;font:normal normal 11px/12.287px 'Liberation Sans', sans-serif;letter-spacing:-0.250px;transform:scaleX(0.9118);transform-origin:0 0;color:#000;">PROFESOR 6</div>
<div class="t" style="left:1070.0px;top:311.85px;font:normal normal 11px/12.287px 'Liberation Sans', sans-serif;letter-spacing:-0.250px;transform:scaleX(0.9132);transform-origin:0 0;color:#000;">PROFESOR 7</div>
<div class="t" style="left:11.1px;top:321.99px;font:italic bold 10.4px/11.617px 'Liberation Sans', sans-serif;letter-spacing:8.551px;color:#000;-webkit-text-stroke:0;">PLANIFICACION</div>
<div class="t" style="left:11.1px;top:373.14px;font:italic bold 10.4px/11.617px 'Liberation Sans', sans-serif;letter-spacing:9.114px;color:#000;-webkit-text-stroke:0;">DOMINIO DE LA ASIGNATURA</div>
<div class="t" style="left:11.1px;top:407.24px;font:italic bold 10.4px/11.617px 'Liberation Sans', sans-serif;letter-spacing:8.798px;color:#000;-webkit-text-stroke:0;">COMUNICACIÓN</div>
<div class="t" style="left:11.1px;top:441.34px;font:italic bold 10.4px/11.617px 'Liberation Sans', sans-serif;letter-spacing:8.498px;color:#000;-webkit-text-stroke:0;">DESARROLLO DE LOS ALUMNOS</div>
<div class="t" style="left:11.1px;top:475.44px;font:italic bold 10.4px/11.617px 'Liberation Sans', sans-serif;letter-spacing:8.975px;color:#000;-webkit-text-stroke:0;">MOTIVACION</div>
<div class="t" style="left:11.1px;top:509.54px;font:italic bold 10.4px/11.617px 'Liberation Sans', sans-serif;letter-spacing:8.897px;color:#000;-webkit-text-stroke:0;">METODOLOGIA</div>
<div class="t" style="left:11.1px;top:543.64px;font:italic bold 10.4px/11.617px 'Liberation Sans', sans-serif;letter-spacing:8.718px;color:#000;-webkit-text-stroke:0;">EVALUACION</div>
<div class="t" style="left:11.1px;top:577.74px;font:italic bold 10.4px/11.617px 'Liberation Sans', sans-serif;letter-spacing:8.587px;color:#000;-webkit-text-stroke:0;">PUNTUALIDAD Y EXPERIENCIA</div>
<div class="t" style="left:11.1px;top:611.84px;font:italic bold 10.4px/11.617px 'Liberation Sans', sans-serif;letter-spacing:8.566px;color:#000;-webkit-text-stroke:0;">CONOCIMIENTO Y EXPERIENCIA</div>
<div class="t" style="left:11.1px;top:645.94px;font:italic bold 10.4px/11.617px 'Liberation Sans', sans-serif;letter-spacing:8.515px;color:#000;-webkit-text-stroke:0;">IDENTIFICACION CON LA ORGANIZACIÓN</div>
<div class="t" style="left:11.0px;top:338.50px;font:normal normal 11px/12.287px 'Liberation Sans', sans-serif;letter-spacing:0.611px;color:#000;"><b style="color:#f00">1.</b> Presenta al inicio del curso: el programa, objetivos, criterios de evaluación, referencias bibliográficas</div>
<div class="t" style="left:11.0px;top:355.55px;font:normal normal 11px/12.287px 'Liberation Sans', sans-serif;letter-spacing:0.651px;color:#000;">y/o electrónicas</div>
<div class="t" style="left:11.0px;top:389.64px;font:normal normal 11px/12.287px 'Liberation Sans', sans-serif;letter-spacing:0.424px;color:#000;"><span style="color:#f00">2.</span> Explica con claridad</div>
<div class="t" style="left:11.0px;top:423.75px;font:normal normal 11px/12.287px 'Liberation Sans', sans-serif;letter-spacing:0.523px;color:#000;"><b style="color:#f00">3</b><b>.</b> Usa correctamente la expresión oral y escrita</div>
<div class="t" style="left:11.0px;top:457.84px;font:normal normal 11px/12.287px 'Liberation Sans', sans-serif;letter-spacing:0.638px;color:#000;"><b style="color:#f00">4.</b> Estimula el crecimiento personal, y propicia el intercambio de ideas con los</div>
<div class="t" style="left:11.0px;top:491.94px;font:normal normal 11px/12.287px 'Liberation Sans', sans-serif;letter-spacing:0.633px;color:#000;"><b style="color:#f00">5</b>. Propicia el interés de los estudiantes.</div>
<div class="t" style="left:11.0px;top:526.04px;font:normal normal 11px/12.287px 'Liberation Sans', sans-serif;letter-spacing:0.570px;color:#000;"><b style="color:#f00">6</b>. Aplica diversas estrategias de evaluación en cada corte</div>
<div class="t" style="left:11.0px;top:560.14px;font:normal normal 11px/12.287px 'Liberation Sans', sans-serif;letter-spacing:0.664px;color:#000;"><b style="color:#f00">7</b>. Informa oportunamente las notas y retroalimenta sobre los asiertos y errores de los estudiantes.</div>
<div class="t" style="left:11.0px;top:594.25px;font:normal normal 11px/12.287px 'Liberation Sans', sans-serif;letter-spacing:0.667px;color:#000;"><b style="color:#f00">8.</b> Asiste puntualmente a las clases</div>
<div class="t" style="left:11.0px;top:628.34px;font:normal normal 11px/12.287px 'Liberation Sans', sans-serif;letter-spacing:0.605px;color:#000;"><b style="color:#f00">9.</b> Capacidad de transmitir el cocnocimiento</div>
<div class="t" style="left:11.0px;top:662.44px;font:normal normal 11px/12.287px 'Liberation Sans', sans-serif;letter-spacing:0.512px;color:#000;"><span style="color:#f00">10</span>. Proyecta con su conducta interna y externa el compromiso con los valores y la misión de la</div>
</body></html>
